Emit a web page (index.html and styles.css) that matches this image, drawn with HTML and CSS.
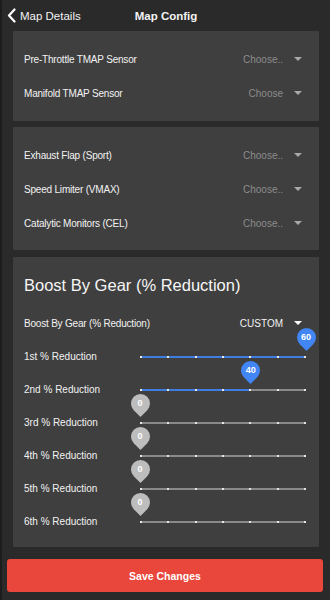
FILE: index.html
```html
<!DOCTYPE html>
<html>
<head>
<meta charset="utf-8">
<link rel="stylesheet" href="styles.css">
</head>
<body>
<div class="app">
  <header class="topbar">
    <a class="back">
      <svg class="chev" width="9" height="15" viewBox="0 0 9 15"><path d="M7.5 1.5 L2 7.5 L7.5 13.5" fill="none" stroke="#fff" stroke-width="2.2" stroke-linecap="round" stroke-linejoin="round"/></svg>
      <span>Map Details</span>
    </a>
    <h1 class="title">Map Config</h1>
  </header>

  <main class="content">
    <section class="card">
      <div class="row"><span class="label">Pre-Throttle TMAP Sensor</span><span class="select"><span class="val muted">Choose..</span><i class="caret"></i></span></div>
      <div class="row"><span class="label">Manifold TMAP Sensor</span><span class="select"><span class="val muted">Choose</span><i class="caret"></i></span></div>
    </section>

    <section class="card card2">
      <div class="row"><span class="label">Exhaust Flap (Sport)</span><span class="select"><span class="val muted">Choose..</span><i class="caret"></i></span></div>
      <div class="row"><span class="label">Speed Limiter (VMAX)</span><span class="select"><span class="val muted">Choose..</span><i class="caret"></i></span></div>
      <div class="row"><span class="label">Catalytic Monitors (CEL)</span><span class="select"><span class="val muted">Choose..</span><i class="caret"></i></span></div>
    </section>

    <section class="card card3">
      <h2 class="card-title">Boost By Gear (% Reduction)</h2>
      <div class="row"><span class="label">Boost By Gear (% Reduction)</span><span class="select"><span class="val">CUSTOM</span><i class="caret light"></i></span></div>

      <div class="srow"><span class="label slabel">1st % Reduction</span>
        <div class="slider active"><div class="fill" style="width:100%"></div><div class="ticks"><i></i><i></i><i></i><i></i><i></i><i></i><i></i></div><div class="pin" style="left:100%"><span class="drop"></span><b>60</b></div></div>
      </div>
      <div class="srow"><span class="label slabel">2nd % Reduction</span>
        <div class="slider active"><div class="fill" style="width:66.667%"></div><div class="ticks"><i></i><i></i><i></i><i></i><i></i><i></i><i></i></div><div class="pin" style="left:66.667%"><span class="drop"></span><b>40</b></div></div>
      </div>
      <div class="srow"><span class="label slabel">3rd % Reduction</span>
        <div class="slider"><div class="ticks"><i></i><i></i><i></i><i></i><i></i><i></i><i></i></div><div class="pin off" style="left:0%"><span class="drop"></span><b>0</b></div></div>
      </div>
      <div class="srow"><span class="label slabel">4th % Reduction</span>
        <div class="slider"><div class="ticks"><i></i><i></i><i></i><i></i><i></i><i></i><i></i></div><div class="pin off" style="left:0%"><span class="drop"></span><b>0</b></div></div>
      </div>
      <div class="srow"><span class="label slabel">5th % Reduction</span>
        <div class="slider"><div class="ticks"><i></i><i></i><i></i><i></i><i></i><i></i><i></i></div><div class="pin off" style="left:0%"><span class="drop"></span><b>0</b></div></div>
      </div>
      <div class="srow"><span class="label slabel">6th % Reduction</span>
        <div class="slider"><div class="ticks"><i></i><i></i><i></i><i></i><i></i><i></i><i></i></div><div class="pin off" style="left:0%"><span class="drop"></span><b>0</b></div></div>
      </div>
    </section>
  </main>

  <footer class="footer">
    <button class="save">Save Changes</button>
  </footer>
</div>
</body>
</html>
```

FILE: styles.css
```css
* { box-sizing: border-box; }
html, body { margin: 0; padding: 0; }
body {
  background: #2a2a2a;
  font-family: "Liberation Sans", Arial, sans-serif;
  color: #f2f2f2;
  width: 330px;
  height: 600px;
  overflow: hidden;
}
.app {
  height: 600px;
  display: flex;
  flex-direction: column;
  border-left: 2px solid #1c1c1c;
}
.topbar {
  height: 31px;
  position: relative;
  display: flex;
  align-items: center;
  padding-left: 5px;
}
.back {
  display: flex;
  align-items: center;
  gap: 4px;
  font-size: 11.5px;
  color: #f2f2f2;
}
.chev { display: block; }
.title {
  margin: 0;
  position: absolute;
  left: 0;
  right: 0;
  text-align: center;
  font-size: 11.5px;
  font-weight: bold;
  pointer-events: none;
}
.content {
  display: flex;
  flex-direction: column;
  gap: 6px;
  padding: 0 11px 0 11px;
}
.card {
  background: #3f3f3f;
  padding: 11px 13px 11px 11px;
  border-radius: 1px;
}
.card2 { padding-bottom: 10px; }
.card3 { margin-top: 1px; padding-top: 16px; padding-bottom: 9px; }
.row {
  height: 34px;
  display: flex;
  align-items: center;
  justify-content: space-between;
}
.label { font-size: 10px; letter-spacing: -0.2px; color: #f2f2f2; }
.slabel { letter-spacing: 0; }
.select { display: flex; align-items: center; gap: 11px; }
.val { font-size: 10px; color: #f2f2f2; }
.val.muted { color: #8c8c8c; }
.caret {
  display: block;
  width: 0; height: 0;
  border-left: 4px solid transparent;
  border-right: 4px solid transparent;
  border-top: 4px solid #a8a8a8;
  margin-right: 4px;
}
.caret.light { border-top-color: #ffffff; }
.card-title {
  margin: 0 0 9px;
  font-size: 16.5px;
  line-height: 24px;
  font-weight: normal;
  color: #f6f6f6;
}
.srow {
  height: 33px;
  display: grid;
  grid-template-columns: 116px 1fr;
  align-items: center;
}
.slider {
  position: relative;
  height: 2px;
  background: #8a8a8a;
}
.fill {
  position: absolute;
  left: 0; top: 0; bottom: 0;
  background: #3f7de0;
}
.ticks {
  position: absolute;
  inset: 0;
  display: flex;
  justify-content: space-between;
}
.ticks i {
  display: block;
  width: 2px;
  height: 2px;
  background: #e6e6e6;
}
.pin {
  position: absolute;
  top: -18px;
  width: 0;
  height: 0;
}
.pin .drop {
  position: absolute;
  left: -9.5px;
  top: -9.5px;
  width: 19px;
  height: 19px;
  background: #4285f4;
  border-radius: 50% 50% 0 50%;
  transform: rotate(45deg);
}
.pin.off .drop { background: #bdbdbd; }
.pin b {
  position: absolute;
  left: -10px;
  top: -6px;
  width: 20px;
  text-align: center;
  font-size: 9px;
  line-height: 11px;
  color: #ffffff;
  font-weight: bold;
}
.footer {
  margin-top: auto;
  padding: 0 7px 8px 5px;
}
.save {
  width: 100%;
  height: 33px;
  border: none;
  border-radius: 3px;
  background: #e9473b;
  color: #fff;
  font-family: "Liberation Sans", Arial, sans-serif;
  font-size: 10.5px;
  font-weight: bold;
}
```
